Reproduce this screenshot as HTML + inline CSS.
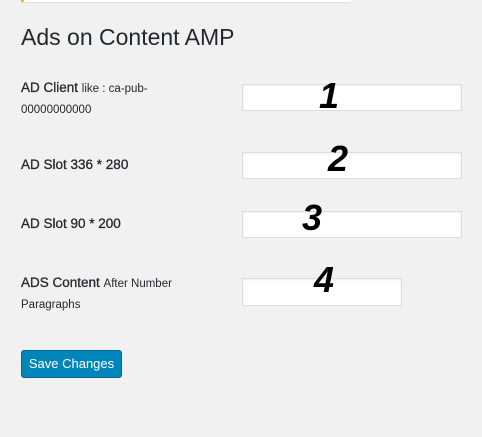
<!DOCTYPE html><html><head><style>
body{margin:0;width:482px;height:437px;background:#f1f1f1;font-family:"Liberation Sans",sans-serif;color:#23282d;position:relative;overflow:hidden}
.a{position:absolute}
.in{position:absolute;background:#fff;border:1px solid #ddd;box-shadow:inset 0 1px 2px rgba(0,0,0,.07);box-sizing:border-box}
.l{position:absolute;left:21px;font-size:13.5px;font-weight:normal;line-height:20px;-webkit-text-stroke:0.3px #23282d}
.l small{font-size:11.5px;-webkit-text-stroke:0}
.n{position:absolute;font-size:36px;line-height:1;font-weight:bold;font-style:italic;color:#000}
</style></head><body>
<div class="a" style="left:21px;top:0;width:330px;height:2px;background:#fff;box-shadow:0 1px 1px rgba(0,0,0,.08)"></div>
<div class="a" style="left:21px;top:0;width:3px;height:2px;background:#ffb900"></div>
<div class="a" style="left:21px;top:24px;font-size:23px;color:#23282d">Ads on Content AMP</div>
<div class="l" style="top:78px">AD Client <small>like : ca-pub-<br>00000000000</small></div>
<div class="in" style="left:242px;top:84px;width:220px;height:27px"></div>
<div class="n" style="left:319px;top:78px">1</div>
<div class="l" style="top:155px">AD Slot 336 * 280</div>
<div class="in" style="left:242px;top:152px;width:220px;height:27px"></div>
<div class="n" style="left:328px;top:141px">2</div>
<div class="l" style="top:214px">AD Slot 90 * 200</div>
<div class="in" style="left:242px;top:211px;width:220px;height:27px"></div>
<div class="n" style="left:302px;top:200px">3</div>
<div class="l" style="top:273px">ADS Content <small>After Number<br>Paragraphs</small></div>
<div class="in" style="left:242px;top:278px;width:160px;height:28px"></div>
<div class="n" style="left:314px;top:262px">4</div>
<div class="a" style="left:21px;top:350px;width:101px;height:28px;background:#0085ba;border:1px solid #006799;box-sizing:border-box;border-radius:3px;color:#fff;font-size:13px;line-height:26px;text-align:center">Save Changes</div>
</body></html>
